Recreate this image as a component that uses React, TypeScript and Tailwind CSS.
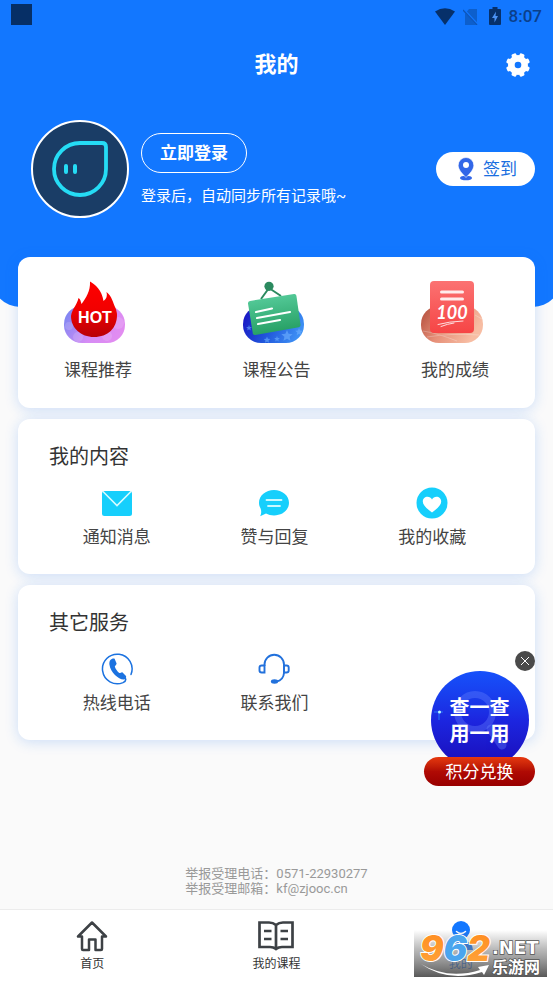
import type { ReactNode } from "react";

const HotIcon = () => (
  <svg viewBox="0 0 62 62" className="size-[62px]" aria-hidden="true">
    <defs>
      <linearGradient id="hot-base" x1="0" x2="1" y1="0.3" y2="0.7">
        <stop offset="0" stopColor="#7f86f2" />
        <stop offset="0.55" stopColor="#d58cf5" />
        <stop offset="1" stopColor="#e38cf0" />
      </linearGradient>
      <linearGradient id="hot-flame" x1="0" x2="0" y1="0" y2="1">
        <stop offset="0" stopColor="#ff0000" />
        <stop offset="0.5" stopColor="#f20000" />
        <stop offset="1" stopColor="#b80007" />
      </linearGradient>
    </defs>
    <rect x="0" y="25" width="61" height="37" rx="18" fill="url(#hot-base)" />
    <g fill="#fff" opacity="0.14">
      <circle cx="14" cy="56" r="5" />
      <circle cx="43" cy="55" r="5" />
      <circle cx="54" cy="42" r="6" />
      <circle cx="5" cy="45" r="4" />
    </g>
    <path
      d="M26 0.5C31 3.500 38 9 39.500 20C42.500 18 43.500 15 42.500 11C48 15 49 22 51.500 27C52.500 30 53 32 53 34C53 47 44 56 30 56C17 56 7 47 7 35C8 28 13 24 14.500 17C16.500 18 16.500 20 17.500 23C22 17 26.500 10 26 0.5Z"
      fill="url(#hot-flame)"
    />
    <text
      x="31"
      y="42"
      textAnchor="middle"
      fill="#fff"
      fontFamily="Liberation Sans, sans-serif"
      fontWeight="700"
      fontSize="16"
    >
      HOT
    </text>
  </svg>
);

const star = (x: number, y: number, r: number) =>
  Array.from({ length: 10 }, (_, i) => {
    const a = (Math.PI / 5) * i - Math.PI / 2;
    const d = i % 2 ? r * 0.45 : r;
    return `${x + Math.cos(a) * d},${y + Math.sin(a) * d}`;
  }).join(" ");

const NoticeIcon = () => (
  <svg viewBox="0 0 62 62" className="size-[62px]" aria-hidden="true">
    <defs>
      <linearGradient id="notice-base" x1="0" x2="1" y1="0.3" y2="0.6">
        <stop offset="0" stopColor="#1a17c4" />
        <stop offset="0.5" stopColor="#2158dc" />
        <stop offset="1" stopColor="#3f93f6" />
      </linearGradient>
      <linearGradient id="notice-board" x1="0" x2="0.2" y1="0" y2="1">
        <stop offset="0" stopColor="#5bd0a0" />
        <stop offset="1" stopColor="#27a065" />
      </linearGradient>
    </defs>
    <rect x="0" y="25" width="61" height="37" rx="18" fill="url(#notice-base)" />
    <g fill="#6fb0ff" opacity="0.6">
      <polygon points={star(44, 55, 6)} />
      <polygon points={star(24, 59, 3.5)} />
      <polygon points={star(34, 58, 3)} />
      <polygon points={star(6, 47, 3)} />
      <polygon points={star(56, 51, 4)} />
    </g>
    <path d="M18 18 26 7l12 8" fill="none" stroke="#2b8a5f" strokeWidth="2" />
    <circle cx="26" cy="5.300" r="4.600" fill="#2b8a5f" />
    <path
      d="M7 20 51 13Q53 12.700 53.400 14.700L57.500 43.500Q57.800 45.700 55.700 46.200L12.500 54Q10.300 54.300 9.800 52.200L5 22.500Q4.800 20.400 7 20Z"
      fill="url(#notice-board)"
    />
    <g stroke="#fff" strokeWidth="2.200" strokeLinecap="round">
      <path d="M13 31 29 27.500" />
      <path d="M14 37 47 31" />
      <path d="M15 43 37 39" />
    </g>
  </svg>
);

const ScoreIcon = () => (
  <svg viewBox="0 0 62 62" className="size-[62px]" aria-hidden="true">
    <defs>
      <linearGradient id="score-base" x1="0" x2="1" y1="0" y2="0.4">
        <stop offset="0" stopColor="#b04a38" />
        <stop offset="0.5" stopColor="#e68f78" />
        <stop offset="1" stopColor="#f7bda3" />
      </linearGradient>
      <linearGradient id="score-sheet" x1="0" x2="0" y1="0" y2="1">
        <stop offset="0" stopColor="#fb7272" />
        <stop offset="1" stopColor="#f64545" />
      </linearGradient>
    </defs>
    <rect x="0" y="25" width="62" height="37" rx="18" fill="url(#score-base)" />
    <g fill="none" stroke="#fff" strokeWidth="1" opacity="0.25">
      <path d="M2 50Q16 52 36 60" />
      <path d="M6 56Q30 52 58 54" />
      <path d="M54 34 61 38" />
    </g>
    <rect x="9" y="0" width="44" height="52" rx="4" fill="url(#score-sheet)" />
    <g stroke="#ffecec" strokeWidth="3" strokeLinecap="round">
      <path d="M20.500 11h21" />
      <path d="M20.500 18h21" />
    </g>
    <text
      x="31"
      y="38"
      textAnchor="middle"
      fill="#fff"
      fontFamily="Lato, sans-serif"
      fontStyle="italic"
      fontWeight="700"
      fontSize="18"
    >
      100
    </text>
    <g fill="none" stroke="#ffdede" strokeWidth="1" strokeLinecap="round">
      <path d="M17 43.500Q28 40.500 42 40" />
      <path d="M20 45.500Q26 43 33 42" />
    </g>
  </svg>
);

const MailIcon = () => (
  <svg viewBox="0 0 32 32" className="size-8" aria-hidden="true">
    <rect x="1" y="4" width="30" height="25" rx="2.500" fill="#16cffc" />
    <path d="M1.500 4 16 18.500 30.500 4" fill="none" stroke="#d8fbff" strokeWidth="1.600" />
  </svg>
);

const ChatIcon = () => (
  <svg viewBox="0 0 32 32" className="size-8" aria-hidden="true">
    <path
      d="M16 3C24.300 3 31 8.500 31 15.800S24.300 28.400 16 28.400C13 28.400 10.300 27.700 8 26.500L2.200 29.200C3.500 26.500 3.500 24 2.600 21.500C1.500 19.800 1 17.800 1 15.800C1 8.500 7.700 3 16 3Z"
      fill="#16cffc"
    />
    <path
      d="M8.500 13h15M10 19h12"
      stroke="#c8f8ff"
      strokeWidth="1.800"
      strokeLinecap="round"
    />
  </svg>
);

const HeartIcon = () => (
  <svg viewBox="0 0 32 32" className="size-8" aria-hidden="true">
    <circle cx="16" cy="16" r="15.500" fill="#16cffc" />
    <path
      d="M16 25.500C11 21.500 6.800 18.500 6.800 14.500C6.800 11.700 9 9.800 11.500 9.800C13.500 9.800 15 10.900 16 12.500C17 10.900 18.500 9.800 20.500 9.800C23 9.800 25.200 11.700 25.200 14.500C25.200 18.500 21 21.500 16 25.500Z"
      fill="#fff"
    />
  </svg>
);

const PhoneIcon = () => (
  <svg viewBox="0 0 32 32" className="size-8" aria-hidden="true">
    <path
      d="M30 21.500A14.800 14.800 0 1 0 22 29.600Q25.500 28 24.500 25.500"
      fill="none"
      stroke="#1b72e0"
      strokeWidth="1.500"
      strokeLinecap="round"
    />
    <path
      d="M9.200 7.200C10.500 5.600 12.800 5 13.600 5.800L15.600 10.500C15.800 11.600 13.800 12.800 13.800 13.600C14.600 16.200 16.300 18.500 18.300 20C19.300 20.300 20.300 18.900 21.300 19.200L25 23C25.700 24.300 24.500 26.600 22.500 26.500C17.500 26.500 9.500 19.500 8.400 11.500C8.200 9.800 8.500 8.200 9.200 7.200Z"
      fill="#1b72e0"
    />
  </svg>
);

const HeadsetIcon = () => (
  <svg viewBox="0 0 32 32" className="size-8" aria-hidden="true">
    <g fill="none" stroke="#2271dc" strokeWidth="1.900">
      <path d="M6.500 13V11.500A9.700 9.700 0 0 1 26 11.500V20Q25.500 27 18.500 28.500" />
      <path d="M6.500 12.500H3.700Q1.500 12.500 1.500 14.500V17.500Q1.500 19.500 3.700 19.500H6.500Z" />
      <path d="M26 12.500H28.500Q30.700 12.500 30.700 14.500V17.500Q30.700 19.500 28.500 19.500H26Z" />
    </g>
    <ellipse cx="16.500" cy="28.500" rx="3.600" ry="2.200" fill="#2271dc" />
  </svg>
);

const HomeIcon = () => (
  <svg viewBox="0 0 32 32" className="size-8" aria-hidden="true">
    <path
      d="M16 2.500 2 16.500H6V29Q6 30 7 30H13V19.500H19.500V30H25Q26 30 26 29V16.500H30Z"
      fill="none"
      stroke="#3d4145"
      strokeWidth="2.500"
      strokeLinejoin="round"
    />
  </svg>
);

const BookIcon = () => (
  <svg viewBox="0 0 36 32" className="h-8 w-9" aria-hidden="true">
    <g fill="none" stroke="#3d4145" strokeWidth="2.700">
      <path d="M18 5Q15 2.500 11 2.500H1.500V27H12Q15.500 27 18 29Q20.500 27 24 27H34.500V2.500H25Q21 2.500 18 5V28" />
      <path d="M6 11h7.500M6 19h7.500M22.500 11H30M22.500 19H30" />
    </g>
  </svg>
);

const UserIcon = () => (
  <svg viewBox="0 0 32 32" className="size-8" aria-hidden="true">
    <circle cx="16" cy="10" r="9" fill="#1277ff" />
    <path
      d="M11.500 11.500Q16 15.500 20.500 11.500"
      fill="none"
      stroke="#fff"
      strokeWidth="1.500"
      strokeLinecap="round"
    />
    <path d="M4 30Q5 20 16 20T28 30Z" fill="#1277ff" />
  </svg>
);

const GearIcon = () => (
  <svg viewBox="0 0 24 24" className="size-6" aria-hidden="true">
    <g fill="#fff">
      <circle cx="12" cy="12" r="10" />
      {[22.5, 67.5, 112.5, 157.5].map((deg) => (
        <rect
          key={deg}
          x="9.5"
          y="0"
          width="5"
          height="24"
          rx="1.5"
          transform={`rotate(${deg} 12 12)`}
        />
      ))}
    </g>
    <circle cx="12" cy="12" r="3.300" fill="#1277ff" />
  </svg>
);

const Avatar = () => (
  <svg viewBox="0 0 98 98" className="size-[98px] shrink-0" aria-hidden="true">
    <circle cx="49" cy="49" r="48" fill="#1a3d66" stroke="#fff" strokeWidth="2" />
    <path
      d="M49 23H71Q75 23 75 27V49A26 26 0 1 1 49 23Z"
      fill="none"
      stroke="#25dcf5"
      strokeWidth="3.800"
    />
    <g stroke="#25dcf5" strokeWidth="4" strokeLinecap="round">
      <path d="M35 46v6M44 46v6" />
    </g>
  </svg>
);

const StatusBar = () => (
  <div className="flex h-8 items-center justify-between px-[11px]">
    <span className="mb-1 size-[21px] bg-[#062f66]" />
    <div className="flex items-center text-[#0b3f8a]">
      <svg viewBox="0 0 20 17" className="h-[17px] w-5" aria-hidden="true">
        <path d="M0 3.500Q10-3 20 3.500L10 17Z" fill="#06306a" />
      </svg>
      <svg viewBox="0 0 15 17" className="ml-2 h-[17px] w-[15px]" aria-hidden="true">
        <path d="M2 17V6L6 1H14V17Z" fill="#0d5fcc" />
        <path d="M0 1 15 17" stroke="#1277ff" strokeWidth="2.500" />
        <path d="M0 2 14 17" stroke="#0d55b8" strokeWidth="1.200" />
      </svg>
      <svg viewBox="0 0 12 18" className="ml-[11px] h-[18px] w-3" aria-hidden="true">
        <path d="M3.500 0h5v2H11q1 0 1 1v14q0 1-1 1H1q-1 0-1-1V3q0-1 1-1h2.500Z" fill="#06306a" />
        <path d="M7 4.500 3 11h2.500v4.500L9 9H6.500Z" fill="#4b93f5" />
      </svg>
      <span className="ml-2 text-[17px] leading-6 font-medium">8:07</span>
    </div>
  </div>
);

const Tile = ({ icon, label }: { icon: ReactNode; label: string }) => (
  <a href="#" className="flex flex-col items-center text-[17px] leading-6 text-[#444]">
    {icon}
    <span className="mt-1.5">{label}</span>
  </a>
);

const Card = ({ title, children }: { title: string; children: ReactNode }) => (
  <section className="rounded-xl bg-white pt-6 pb-[25px] shadow-[0_2px_14px_rgba(18,110,240,0.2)]">
    <h2 className="pl-[31px] text-xl leading-7 text-[#333]">{title}</h2>
    <div className="mt-4 grid grid-cols-3 pr-6 pl-5">{children}</div>
  </section>
);

const features = [
  { label: "课程推荐", icon: <HotIcon /> },
  { label: "课程公告", icon: <NoticeIcon /> },
  { label: "我的成绩", icon: <ScoreIcon /> },
];

const tabs = [
  { label: "首页", icon: <HomeIcon />, active: false },
  { label: "我的课程", icon: <BookIcon />, active: false },
  { label: "我的", icon: <UserIcon />, active: true },
];

const Promo = () => (
  <aside className="absolute right-[18px] bottom-[197px] flex w-[111px] flex-col items-center">
    <button
      type="button"
      aria-label="关闭"
      className="flex size-5 items-center justify-center self-end rounded-full bg-[#4a4a4a]"
    >
      <svg viewBox="0 0 10 10" className="size-2.5" aria-hidden="true">
        <path d="M1 1 9 9M9 1 1 9" stroke="#fff" strokeWidth="1" />
      </svg>
    </button>
    <a href="#" className="flex flex-col items-center">
      <span className="relative flex size-[98px] flex-col items-center overflow-hidden rounded-full bg-linear-to-b from-[#1651fb] via-[#1c26e0] to-[#1a08b8] pt-6 text-xl leading-[26px] font-bold text-white">
        <svg viewBox="0 0 98 98" className="absolute inset-0" aria-hidden="true">
          <circle cx="44" cy="41" r="17.500" fill="none" stroke="#6a86ff" strokeWidth="7" opacity="0.35" />
          <path d="M60 58 71 74" stroke="#6a86ff" strokeWidth="9" strokeLinecap="round" opacity="0.35" />
          <path d="M8 40v9M3 41h9" stroke="#2b8cff" strokeWidth="0.800" />
          <circle cx="8.500" cy="41" r="1.500" fill="#b9f4ff" />
        </svg>
        <span className="relative">查一查</span>
        <span className="relative">用一用</span>
      </span>
      <span className="relative -mt-3 flex h-[29px] w-[111px] items-center justify-center rounded-full bg-linear-to-b from-[#e6380f] via-[#b00a04] to-[#980000] text-[17px] leading-6 text-white">
        积分兑换
      </span>
    </a>
  </aside>
);

const SiteBadge = () => (
  <svg
    viewBox="0 0 133 64"
    className="pointer-events-none absolute right-1.5 bottom-1.5 h-16 w-[133px]"
    aria-hidden="true"
  >
    <defs>
      <linearGradient id="badge-bg" x1="0" x2="0" y1="0" y2="1">
        <stop offset="0" stopColor="#777" stopOpacity="0" />
        <stop offset="0.4" stopColor="#777" stopOpacity="0.5" />
        <stop offset="1" stopColor="#4a4a4a" stopOpacity="0.92" />
      </linearGradient>
      <linearGradient id="badge-orange" x1="0" x2="0" y1="0" y2="1">
        <stop offset="0" stopColor="#ff8a1e" />
        <stop offset="1" stopColor="#ffa63c" />
      </linearGradient>
    </defs>
    <rect y="17" width="133" height="47" fill="url(#badge-bg)" />
    <text
      x="6"
      y="48"
      fontFamily="Inter, sans-serif"
      fontStyle="italic"
      fontWeight="900"
      fontSize="35"
      stroke="#fff"
      strokeWidth="2"
      paintOrder="stroke"
      fill="url(#badge-orange)"
    >
      9<tspan fill="#4aa5ee">6</tspan>2
    </text>
    <path d="M7 51Q34 67 66 57L64 54 75 52 70 62 68 59Q34 70 7 51Z" fill="#fff" />
    <g fill="#fff" stroke="#555" strokeWidth="1.500" paintOrder="stroke" fontWeight="700">
      <text x="78" y="41" fontFamily="DejaVu Sans, sans-serif" fontSize="18">
        .NET
      </text>
      <text x="78" y="60" fontFamily="Noto Sans CJK SC, sans-serif" fontSize="16">
        乐游网
      </text>
    </g>
  </svg>
);

const App = () => {
  return (
    <div className="relative flex min-h-screen flex-col bg-[#fafafa] font-[Roboto,'Noto_Sans_CJK_SC',sans-serif]">
      <header className="relative overflow-hidden pb-[89px] text-white">
        <div className="absolute inset-y-0 -right-2 -left-2 rounded-b-[28px] bg-[#1277ff]" />
        <div className="relative">
          <StatusBar />
          <div className="relative flex h-16 items-center justify-center pt-0.5">
            <h1 className="text-[22px] leading-8 font-bold">我的</h1>
            <button type="button" aria-label="设置" className="absolute right-[23px]">
              <GearIcon />
            </button>
          </div>
          <div className="mt-6 flex items-center pr-[18px] pl-[31px]">
            <Avatar />
            <div className="ml-3 flex-1 pt-0.5">
              <button
                type="button"
                className="h-10 w-[106px] rounded-full border border-white text-[17px] leading-6 font-bold"
              >
                立即登录
              </button>
              <p className="mt-[11px] text-[15px] leading-6 whitespace-nowrap">
                登录后，自动同步所有记录哦~
              </p>
            </div>
            <button
              type="button"
              className="flex h-[34px] w-[99px] items-center justify-end gap-2 rounded-full bg-white pr-[18px] text-[17px] leading-6 text-[#1a6fe0]"
            >
              <svg viewBox="0 0 18 24" className="h-6 w-[18px]" aria-hidden="true">
                <ellipse cx="9" cy="21" rx="6" ry="2.300" fill="#3267e8" />
                <path
                  d="M9 0.500A7.800 7.800 0 0 1 16.800 8.300C16.800 12.500 13 16.500 9 20.500C5 16.500 1.200 12.500 1.200 8.300A7.800 7.800 0 0 1 9 0.500Z"
                  fill="#3267e8"
                  stroke="#fff"
                  strokeWidth="0.600"
                />
                <circle cx="9" cy="8" r="3" fill="#fff" />
              </svg>
              签到
            </button>
          </div>
        </div>
      </header>

      <main className="relative -mt-[50px] flex flex-1 flex-col gap-[11px] px-[18px]">
        <section className="flex justify-between rounded-xl bg-white px-[46px] pt-6 pb-[26px] shadow-[0_2px_14px_rgba(18,110,240,0.2)]">
          {features.map(({ label, icon }) => (
            <a
              key={label}
              href="#"
              className="flex w-[68px] flex-col items-center gap-[15px] text-[17px] leading-6 whitespace-nowrap text-[#444]"
            >
              <span className="mr-1.5">{icon}</span>
              {label}
            </a>
          ))}
        </section>
        <Card title="我的内容">
          <Tile icon={<MailIcon />} label="通知消息" />
          <Tile icon={<ChatIcon />} label="赞与回复" />
          <Tile icon={<HeartIcon />} label="我的收藏" />
        </Card>
        <Card title="其它服务">
          <Tile icon={<PhoneIcon />} label="热线电话" />
          <Tile icon={<HeadsetIcon />} label="联系我们" />
        </Card>
        <footer className="mx-auto mt-auto pb-[13px] text-[13px] leading-[15px] text-[#999]">
          <p>举报受理电话：0571-22930277</p>
          <p>举报受理邮箱：kf@zjooc.cn</p>
        </footer>
      </main>

      <nav className="grid grid-cols-3 border-t border-[#ececec] bg-white pt-2.5 pb-[11px]">
        {tabs.map(({ label, icon, active }) => (
          <a
            key={label}
            href="#"
            className={`flex flex-col items-center text-xs leading-4 ${active ? "text-[#1277ff]" : "text-[#333]"}`}
          >
            {icon}
            <span className="mt-1">{label}</span>
          </a>
        ))}
      </nav>

      <Promo />
      <SiteBadge />
    </div>
  );
};

export default App;
